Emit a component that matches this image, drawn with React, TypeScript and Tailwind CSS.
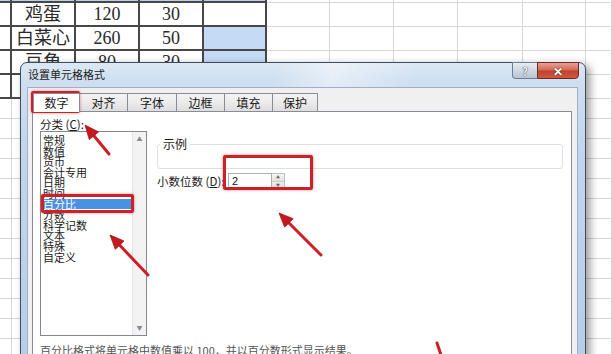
import React from "react";

const COLW = 11;
const ROWN = 18;
const data: Record<string, string> = {
  "1-1": "鸡蛋",
  "1-2": "120",
  "1-3": "30",
  "2-1": "白菜心",
  "2-2": "260",
  "2-3": "50",
  "3-1": "豆角",
  "3-2": "80",
  "3-3": "30",
};

function cellClass(r: number, c: number) {
  const dark = c <= 4 && r <= 4;
  let bg = "bg-white";
  if (r === 0 && c <= 4) bg = "bg-[#bccde4]";
  if (c === 4 && r >= 2 && r <= 4) bg = "bg-[#c5dbf5]";
  const b = dark
    ? "border-r-2 border-b-2 border-[#474747]"
    : "border-r border-b border-[#d7d7d7]";
  return `${b} ${bg} flex items-center justify-center overflow-hidden`;
}

function Sheet() {
  const cells: React.ReactNode[] = [];
  for (let r = 0; r < ROWN; r++) {
    for (let c = 0; c < COLW; c++) {
      const t = data[`${r}-${c}`];
      cells.push(
        <div key={`${r}-${c}`} className={cellClass(r, c)}>
          {t ? (
            <span className="text-[18px] leading-[20px] text-[#2a2a2a] font-['Liberation_Serif','Noto_Sans_CJK_SC',serif]">
              {t}
            </span>
          ) : null}
        </div>
      );
    }
  }
  return (
    <div className="grid grid-cols-[12px_64px_64px_64px_63px_63px_64px_64px_65px_63px_26px] grid-rows-[3px_24px_24px_24px_24px_20px_20px_20px_20px_20px_20px_20px_20px_20px_20px_20px_20px_20px]">
      {cells}
    </div>
  );
}

const listItems = [
  "常规",
  "数值",
  "货币",
  "会计专用",
  "日期",
  "时间",
  "百分比",
  "分数",
  "科学记数",
  "文本",
  "特殊",
  "自定义",
];

const tabs = [
  { t: "数字", w: "w-[47px]", sel: true },
  { t: "对齐", w: "w-[48px]", sel: false },
  { t: "字体", w: "w-[49px]", sel: false },
  { t: "边框", w: "w-[48px]", sel: false },
  { t: "填充", w: "w-[48px]", sel: false },
  { t: "保护", w: "w-[45px]", sel: false },
];

function Arrow({ tx, ty, sx, sy }: { tx: number; ty: number; sx: number; sy: number }) {
  const dx = tx - sx;
  const dy = ty - sy;
  const len = Math.hypot(dx, dy);
  const ux = dx / len;
  const uy = dy / len;
  const hl = 14;
  const hw = 6;
  const bx = tx - ux * hl;
  const by = ty - uy * hl;
  const px = -uy;
  const py = ux;
  const pts = `${tx},${ty} ${bx + px * hw},${by + py * hw} ${bx - px * hw},${by - py * hw}`;
  return (
    <g>
      <line x1={sx} y1={sy} x2={bx + ux * 2} y2={by + uy * 2} stroke="#cf1f25" strokeWidth={3} strokeLinecap="round" />
      <polygon points={pts} fill="#c8181f" stroke="#a51218" strokeWidth={0.8} strokeLinejoin="round" />
    </g>
  );
}

export default function App() {
  return (
    <div className="relative w-[612px] h-[354px] overflow-hidden bg-white font-['Noto_Sans_CJK_SC',sans-serif]">
      <Sheet />

      {/* dialog window */}
      <div className="absolute left-[20px] top-[62px] w-[566px] h-[300px] rounded-t-[7px] border border-[#3e4b5c] bg-[linear-gradient(180deg,#dce8f4_0%,#cfdff0_6%,#c1d5ec_30%,#b8cde7_100%)] shadow-[4px_3px_9px_rgba(0,0,0,0.4)] flex flex-col">
        <div className="relative h-[24px] flex items-start pl-[7px] bg-[linear-gradient(100deg,rgba(255,255,255,0)_0%,rgba(255,255,255,0)_45%,rgba(255,255,255,0.45)_55%,rgba(255,255,255,0)_70%,rgba(255,255,255,0)_100%)] rounded-t-[6px]">
          <span className="mt-[5px] text-[11px] leading-[13px] text-[#1c1c1c]">设置单元格格式</span>
          <div className="ml-auto mr-[6px] flex -mt-px">
            <div className="w-[25px] h-[17px] rounded-bl-[4px] border border-[#6d7d92] border-r-0 bg-[linear-gradient(180deg,#e6ecf3_0%,#cfd8e3_50%,#b9c5d3_100%)] flex items-center justify-center text-[11px] font-bold leading-[12px] text-[#f4f6f8] [text-shadow:0_0_1px_#2f3d50,0_0_1px_#2f3d50]">
              ?
            </div>
            <div className="w-[42px] h-[17px] rounded-br-[4px] border border-[#6e2a22] bg-[linear-gradient(180deg,#e6a395_0%,#d26a57_45%,#c2412d_55%,#cf5a3f_100%)] flex items-center justify-center text-[12px] font-bold leading-[12px] text-white [text-shadow:0_0_1px_#5a1a12,0_0_1px_#5a1a12]">
              ✕
            </div>
          </div>
        </div>

        <div className="flex-1 ml-[6px] mr-[7px] border border-[#9bb0ca] bg-[#f0f0f0] pt-[5px] pl-[4px] pr-[5px] flex flex-col">
          <div className="flex items-end h-[18px] pl-px">
            {tabs.map((tab) => (
              <div
                key={tab.t}
                className={
                  tab.sel
                    ? `${tab.w} h-[19px] -mb-px z-10 bg-white border border-b-0 border-[#898c95] flex items-center justify-center text-[12px] leading-[14px] text-[#1a1a1a]`
                    : `${tab.w} h-[18px] bg-[linear-gradient(180deg,#f4f4f4_0%,#ebebeb_50%,#dedede_100%)] border-t border-r border-[#898c95] flex items-center justify-center text-[12px] leading-[14px] text-[#1a1a1a]`
                }
              >
                {tab.t}
              </div>
            ))}
          </div>

          <div className="flex-1 bg-white border border-[#898c95] flex flex-col">
            <div className="flex pt-[6px]">
              <div className="ml-[7px] w-[107px] flex flex-col">
                <div className="h-[13px] text-[11.5px] leading-[13px] text-[#1a1a1a]">
                  分类 (<span className="underline">C</span>):
                </div>
                <div className="h-[205px] border border-[#828790] bg-white flex">
                  <div className="flex-1 pt-[3px] pl-px flex flex-col">
                    {listItems.map((it) => (
                      <div
                        key={it}
                        className={
                          it === "百分比"
                            ? "h-[10.6px] bg-[#4b91e3] text-white text-[11px] leading-[10.6px] pl-px overflow-visible"
                            : "h-[10.6px] text-[#1a1a1a] text-[11px] leading-[10.6px] pl-px overflow-visible"
                        }
                      >
                        {it}
                      </div>
                    ))}
                  </div>
                  <div className="w-[14px] bg-[#f3f3f3] border-l border-[#e4e4e4] flex flex-col items-center justify-between py-[4px]">
                    <span className="text-[6px] leading-[6px] text-[#8a8a8a]">▲</span>
                    <span className="text-[6px] leading-[6px] text-[#8a8a8a]">▼</span>
                  </div>
                </div>
              </div>

              <div className="ml-[10px] mr-[8px] flex-1 flex flex-col pt-[26px]">
                <div className="relative h-[25px] border border-[#d9e0e6] rounded-[3px]">
                  <span className="absolute left-[2px] -top-[7px] bg-white px-[3px] text-[12px] leading-[12px] text-[#1a1a1a]">
                    示例
                  </span>
                </div>
                <div className="mt-[4px] flex items-center h-[16px]">
                  <span className="w-[71px] text-[11.5px] leading-[14px] text-[#1a1a1a]">
                    小数位数 (<span className="underline">D</span>):
                  </span>
                  <div className="w-[44px] h-[16px] border border-[#abadb3] bg-white text-[11px] leading-[14px] pl-[3px] text-[#111] font-['Liberation_Sans',sans-serif]">
                    2
                  </div>
                  <div className="w-[13px] h-[16px] flex flex-col border border-l-0 border-[#b8c0cc]">
                    <div className="flex-1 bg-[linear-gradient(180deg,#f6f6f6,#e2e2e2)] border-b border-[#c8ced6] flex items-center justify-center text-[4px] leading-[4px] text-[#666]">
                      ▲
                    </div>
                    <div className="flex-1 bg-[linear-gradient(180deg,#eeeeee,#dadada)] flex items-center justify-center text-[4px] leading-[4px] text-[#666]">
                      ▼
                    </div>
                  </div>
                </div>
              </div>
            </div>
            <div className="ml-[7px] mt-[8px] text-[11px] leading-[13px] text-[#555] whitespace-nowrap">
              百分比格式将单元格中数值乘以 100，并以百分数形式显示结果。
            </div>
          </div>
        </div>
      </div>

      {/* annotation boxes */}
      <div className="absolute left-[31px] top-[91px] w-[49px] h-[22px] border-[3px] border-[#c9232a] rounded-[2px] shadow-[0_0_3px_rgba(200,30,30,0.55)]" />
      <div className="absolute left-[41px] top-[194px] w-[93px] h-[19px] border-[3px] border-[#c9232a] rounded-[2px] shadow-[0_0_3px_rgba(200,30,30,0.55)]" />
      <div className="absolute left-[223px] top-[155px] w-[90px] h-[35px] border-[3px] border-[#c9232a] rounded-[2px] shadow-[0_0_3px_rgba(200,30,30,0.55)]" />

      <svg className="absolute inset-0 pointer-events-none" width={612} height={354} viewBox="0 0 612 354">
        <Arrow tx={85} ty={125} sx={109} sy={154} />
        <Arrow tx={110} ty={235} sx={148} sy={275} />
        <Arrow tx={279} ty={213} sx={321} sy={255} />
        <line x1={437} y1={343} x2={442} y2={358} stroke="#cf1f25" strokeWidth={3} strokeLinecap="round" />
      </svg>
    </div>
  );
}
